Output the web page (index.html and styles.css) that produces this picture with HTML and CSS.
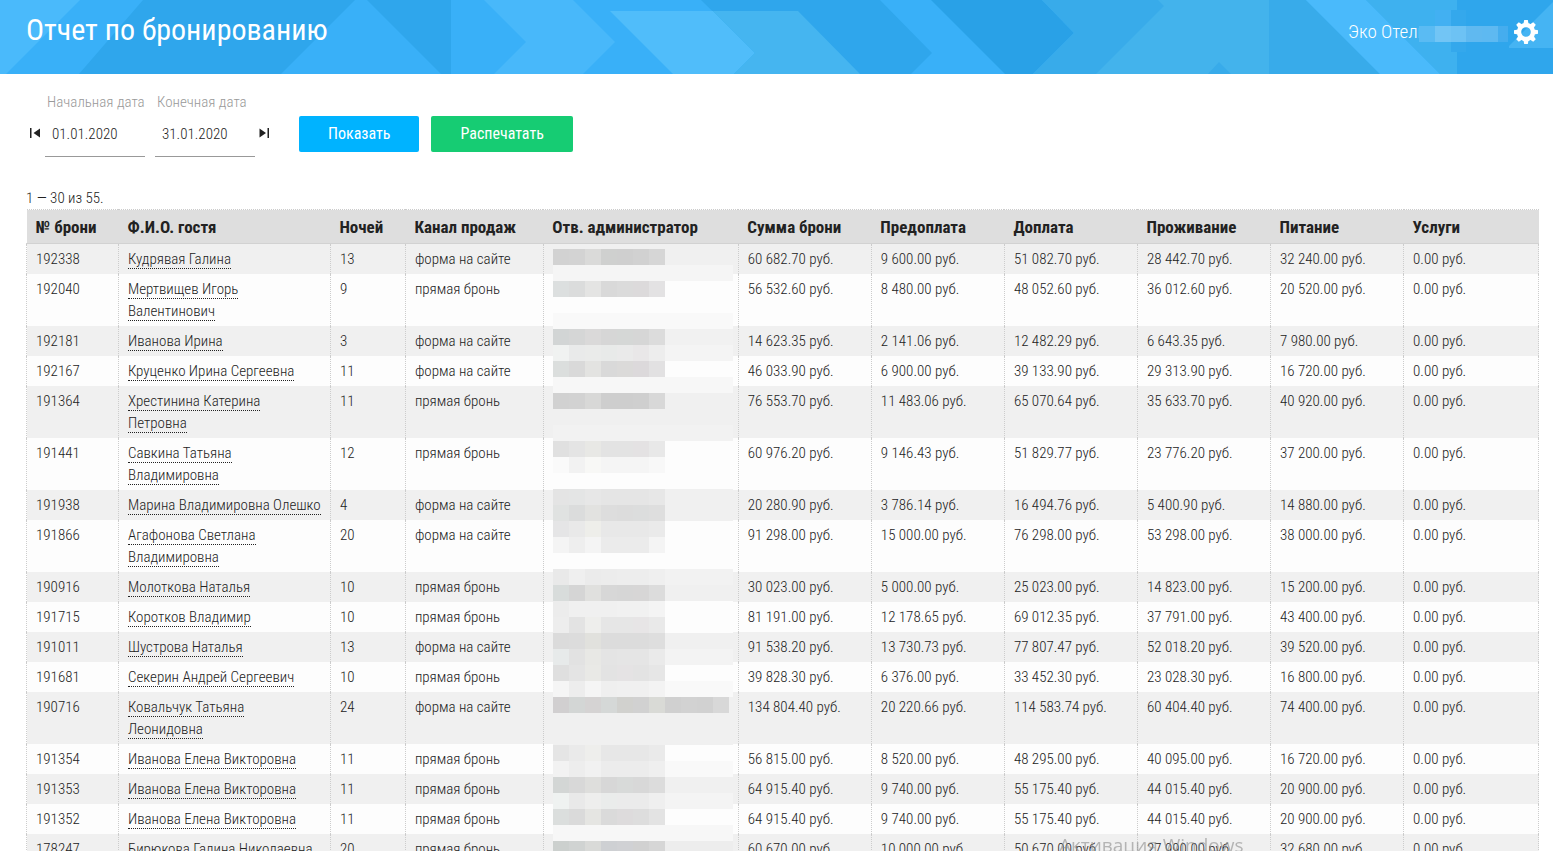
FILE: index.html
```html
<!DOCTYPE html>
<html lang="ru">
<head>
<meta charset="utf-8">
<title>Отчет по бронированию</title>
<link rel="stylesheet" href="styles.css">
</head>
<body>
<header class="header">
  <svg class="header-art" viewBox="0 0 1553 74" preserveAspectRatio="xMinYMin slice" aria-hidden="true">
    <rect width="1553" height="74" fill="#39b0f8"/>
    <path d="M0 0H80L6 74H0Z" fill="#4abafb"/>
    <path d="M143 0H355L281 74H79ZM367 0H451V74H441Z" fill="#2fa6ec"/>
    <path d="M484 0H573L615 42L583 74H494L526 42Z" fill="#48b8fa"/>
    <path d="M701 0H880L932 53L911 74H734L755 53Z" fill="#2fa6ec"/>
    <path d="M610 11H713L755 53L734 74H673Z" fill="#50bdfa"/>
    <path d="M713 11H798L860 74H734L755 53Z" fill="#45b5f0"/>
    <path d="M931 0H1042L1074 33L1033 74H1005Z" fill="#29a1e7"/>
    <path d="M1042 0H1306L1380 74H1033L1074 33Z" fill="#38abea"/>
    <path d="M1158 0H1269V74H1231L1219 62L1208 74H1096L1164 6Z" fill="#43b3ec"/>
    <path d="M1306 0H1366L1440 74H1380Z" fill="#4abafb"/>
    <path d="M1366 0H1457V74H1440Z" fill="#3eb1ef"/>
    <path d="M1457 0H1553V74H1457Z" fill="#2fa6ec"/>
    <path d="M1553 2V48H1509V46Z" fill="#45b4f3"/>
  </svg>
  <h1 class="title">Отчет по бронированию</h1>
  <div class="account">
    <span class="hotel">Эко Отель</span>
    <svg class="hotel-mask" width="94" height="44" viewBox="0 0 94 44" aria-hidden="true">
      <path d="M21 0H37V16H21Z" fill="#42b0f2"/>
      <path d="M37 0H52V42H37Z" fill="#34a8ec"/>
      <path d="M5 16H21V32H5Z" fill="#5abbf3"/>
      <path d="M21 16H37V32H21Z" fill="#72c5f5"/>
      <path d="M37 16H52V32H37Z" fill="#6dc2f4"/>
      <path d="M52 16H68V32H52Z" fill="#60b9f0"/>
      <path d="M68 16H84V32H68Z" fill="#5eb9f1"/>
      <path d="M84 16H94V32H84Z" fill="#45adee"/>
    </svg>
    <button class="gear" type="button" aria-label="Настройки">
      <svg width="24" height="24" viewBox="0 0 24 24" aria-hidden="true">
        <circle cx="12" cy="12" r="7" fill="none" stroke="#fff" stroke-width="4.4"/>
        <g fill="#fff">
          <path id="tooth" d="M10.2 0H13.8L14.6 4H9.4Z"/>
          <use href="#tooth" transform="rotate(45 12 12)"/>
          <use href="#tooth" transform="rotate(90 12 12)"/>
          <use href="#tooth" transform="rotate(135 12 12)"/>
          <use href="#tooth" transform="rotate(180 12 12)"/>
          <use href="#tooth" transform="rotate(225 12 12)"/>
          <use href="#tooth" transform="rotate(270 12 12)"/>
          <use href="#tooth" transform="rotate(315 12 12)"/>
        </g>
      </svg>
    </button>
  </div>
</header>
<main class="content">
  <form class="filters">
    <button class="step" type="button" aria-label="Предыдущий месяц"><svg width="12" height="10" viewBox="0 0 12 10" aria-hidden="true"><path d="M0 0H1.500V10H0ZM10 .5V9.5L3.500 5Z" fill="#222"/></svg></button>
    <div class="field"><label for="from">Начальная дата</label><input id="from" type="text" value="01.01.2020"></div>
    <div class="field field-last"><label for="to">Конечная дата</label><input id="to" type="text" value="31.01.2020"></div>
    <button class="step" type="button" aria-label="Следующий месяц"><svg width="12" height="10" viewBox="0 0 12 10" aria-hidden="true"><path d="M8.500 0H10V10H8.500ZM.5 .5V9.5L7 5Z" fill="#222"/></svg></button>
    <div class="actions">
      <button class="btn btn-show" type="button">Показать</button>
      <button class="btn btn-print" type="button">Распечатать</button>
    </div>
  </form>
  <p class="count">1 — 30 из 55.</p>
  <table class="report">
    <colgroup><col class="c-id"><col class="c-guest"><col class="c-nights"><col class="c-channel"><col class="c-admin"><col class="c-sum"><col class="c-sum"><col class="c-sum"><col class="c-sum"><col class="c-sum"><col class="c-last"></colgroup>
    <thead>
      <tr><th>№ брони</th><th>Ф.И.О. гостя</th><th>Ночей</th><th>Канал продаж</th><th>Отв. администратор</th><th>Сумма брони</th><th>Предоплата</th><th>Доплата</th><th>Проживание</th><th>Питание</th><th>Услуги</th></tr>
    </thead>
    <tbody>
      <tr><td>192338</td><td><a href="#">Кудрявая Галина</a></td><td>13</td><td>форма на сайте</td><td><div class="anchor"><svg class="mosaic" id="mosaic" width="180" height="608" aria-hidden="true"></svg></div></td><td>60 682.70 руб.</td><td>9 600.00 руб.</td><td>51 082.70 руб.</td><td>28 442.70 руб.</td><td>32 240.00 руб.</td><td>0.00 руб.</td></tr>
      <tr><td>192040</td><td><a href="#">Мертвищев Игорь Валентинович</a></td><td>9</td><td>прямая бронь</td><td></td><td>56 532.60 руб.</td><td>8 480.00 руб.</td><td>48 052.60 руб.</td><td>36 012.60 руб.</td><td>20 520.00 руб.</td><td>0.00 руб.</td></tr>
      <tr><td>192181</td><td><a href="#">Иванова Ирина</a></td><td>3</td><td>форма на сайте</td><td></td><td>14 623.35 руб.</td><td>2 141.06 руб.</td><td>12 482.29 руб.</td><td>6 643.35 руб.</td><td>7 980.00 руб.</td><td>0.00 руб.</td></tr>
      <tr><td>192167</td><td><a href="#">Круценко Ирина Сергеевна</a></td><td>11</td><td>форма на сайте</td><td></td><td>46 033.90 руб.</td><td>6 900.00 руб.</td><td>39 133.90 руб.</td><td>29 313.90 руб.</td><td>16 720.00 руб.</td><td>0.00 руб.</td></tr>
      <tr><td>191364</td><td><a href="#">Хрестинина Катерина Петровна</a></td><td>11</td><td>прямая бронь</td><td></td><td>76 553.70 руб.</td><td>11 483.06 руб.</td><td>65 070.64 руб.</td><td>35 633.70 руб.</td><td>40 920.00 руб.</td><td>0.00 руб.</td></tr>
      <tr><td>191441</td><td><a href="#">Савкина Татьяна Владимировна</a></td><td>12</td><td>прямая бронь</td><td></td><td>60 976.20 руб.</td><td>9 146.43 руб.</td><td>51 829.77 руб.</td><td>23 776.20 руб.</td><td>37 200.00 руб.</td><td>0.00 руб.</td></tr>
      <tr><td>191938</td><td><a href="#">Марина Владимировна Олешко</a></td><td>4</td><td>форма на сайте</td><td></td><td>20 280.90 руб.</td><td>3 786.14 руб.</td><td>16 494.76 руб.</td><td>5 400.90 руб.</td><td>14 880.00 руб.</td><td>0.00 руб.</td></tr>
      <tr><td>191866</td><td><a href="#">Агафонова Светлана Владимировна</a></td><td>20</td><td>форма на сайте</td><td></td><td>91 298.00 руб.</td><td>15 000.00 руб.</td><td>76 298.00 руб.</td><td>53 298.00 руб.</td><td>38 000.00 руб.</td><td>0.00 руб.</td></tr>
      <tr><td>190916</td><td><a href="#">Молоткова Наталья</a></td><td>10</td><td>прямая бронь</td><td></td><td>30 023.00 руб.</td><td>5 000.00 руб.</td><td>25 023.00 руб.</td><td>14 823.00 руб.</td><td>15 200.00 руб.</td><td>0.00 руб.</td></tr>
      <tr><td>191715</td><td><a href="#">Коротков Владимир</a></td><td>10</td><td>прямая бронь</td><td></td><td>81 191.00 руб.</td><td>12 178.65 руб.</td><td>69 012.35 руб.</td><td>37 791.00 руб.</td><td>43 400.00 руб.</td><td>0.00 руб.</td></tr>
      <tr><td>191011</td><td><a href="#">Шустрова Наталья</a></td><td>13</td><td>форма на сайте</td><td></td><td>91 538.20 руб.</td><td>13 730.73 руб.</td><td>77 807.47 руб.</td><td>52 018.20 руб.</td><td>39 520.00 руб.</td><td>0.00 руб.</td></tr>
      <tr><td>191681</td><td><a href="#">Секерин Андрей Сергеевич</a></td><td>10</td><td>прямая бронь</td><td></td><td>39 828.30 руб.</td><td>6 376.00 руб.</td><td>33 452.30 руб.</td><td>23 028.30 руб.</td><td>16 800.00 руб.</td><td>0.00 руб.</td></tr>
      <tr><td>190716</td><td><a href="#">Ковальчук Татьяна Леонидовна</a></td><td>24</td><td>форма на сайте</td><td></td><td>134 804.40 руб.</td><td>20 220.66 руб.</td><td>114 583.74 руб.</td><td>60 404.40 руб.</td><td>74 400.00 руб.</td><td>0.00 руб.</td></tr>
      <tr><td>191354</td><td><a href="#">Иванова Елена Викторовна</a></td><td>11</td><td>прямая бронь</td><td></td><td>56 815.00 руб.</td><td>8 520.00 руб.</td><td>48 295.00 руб.</td><td>40 095.00 руб.</td><td>16 720.00 руб.</td><td>0.00 руб.</td></tr>
      <tr><td>191353</td><td><a href="#">Иванова Елена Викторовна</a></td><td>11</td><td>прямая бронь</td><td></td><td>64 915.40 руб.</td><td>9 740.00 руб.</td><td>55 175.40 руб.</td><td>44 015.40 руб.</td><td>20 900.00 руб.</td><td>0.00 руб.</td></tr>
      <tr><td>191352</td><td><a href="#">Иванова Елена Викторовна</a></td><td>11</td><td>прямая бронь</td><td></td><td>64 915.40 руб.</td><td>9 740.00 руб.</td><td>55 175.40 руб.</td><td>44 015.40 руб.</td><td>20 900.00 руб.</td><td>0.00 руб.</td></tr>
      <tr><td>178247</td><td><a href="#">Бирюкова Галина Николаевна</a></td><td>20</td><td>прямая бронь</td><td></td><td>60 670.00 руб.</td><td>10 000.00 руб.</td><td>50 670.00 руб.</td><td>27 990.00 руб.</td><td>32 680.00 руб.</td><td>0.00 руб.</td></tr>
    </tbody>
  </table>
</main>
<div class="watermark">Активация Windows</div>
<script src="script.js"></script>
</body>
</html>
```
FILE: styles.css
```css
* { box-sizing: border-box; }

body {
  margin: 0;
  height: 100vh;
  overflow: hidden;
  background: #fff;
  color: #222;
  font: 300 15px/22px "Roboto Condensed", Roboto, sans-serif;
}

button, input { font: inherit; color: inherit; }

button {
  padding: 0;
  border: 0;
  background: none;
  cursor: pointer;
}

.header {
  position: relative;
  display: flex;
  justify-content: space-between;
  align-items: flex-start;
  height: 74px;
  padding: 8px 15px 0 26px;
  overflow: hidden;
  color: #fff;
  background: #39b0f8;
}

.header-art {
  position: absolute;
  top: 0;
  left: 0;
  width: 100%;
  height: 100%;
}

.title {
  position: relative;
  margin: 0;
  font-size: 30px;
  font-weight: 400;
  line-height: 44px;
}

.account {
  position: relative;
  display: flex;
  align-items: center;
  height: 48px;
}

.hotel {
  width: 71px;
  overflow: hidden;
  white-space: nowrap;
  font-size: 19px;
}

.hotel-mask {
  height: 44px;
  margin-left: -5px;
}

.gear {
  width: 24px;
  height: 24px;
  margin-left: 6px;
}

.gear svg, .step svg { display: block; }

.content { padding: 17px 14px 0 26px; }

.filters {
  display: flex;
  align-items: flex-end;
}

.step {
  display: flex;
  align-items: center;
  justify-content: center;
  width: 19px;
  height: 44px;
  padding-bottom: 4px;
}

.field {
  display: flex;
  flex-direction: column;
  width: 100px;
}

.field-last { margin-left: 10px; }

.field label {
  padding-left: 2px;
  color: #999;
  white-space: nowrap;
}

.field input {
  width: 100%;
  height: 44px;
  padding: 0 7px 2px;
  border: 0;
  border-bottom: 1px solid #999;
  border-radius: 0;
  background: none;
  outline: 0;
}

.actions {
  display: flex;
  gap: 12px;
  margin: 0 0 5px 25px;
}

.btn {
  height: 36px;
  padding: 0 29px;
  border-radius: 2px;
  color: #fff;
  font-size: 16px;
  font-weight: 400;
}

.btn-show { background: #00b3ff; }
.btn-print { background: #16cc73; }

.count { margin: 30px 0 0; }

.report {
  width: 100%;
  table-layout: fixed;
  border-collapse: collapse;
}

.c-id { width: 6.08%; }
.c-guest { width: 14.02%; }
.c-nights { width: 4.96%; }
.c-channel { width: 9.12%; }
.c-admin { width: 12.9%; }
.c-sum { width: 8.8%; }

.report th {
  height: 34px;
  padding: 0 0 0 9px;
  border-top: 1px dotted #ccc;
  border-bottom: 1px solid #d2d2d2;
  background: #dedede;
  font-size: 17px;
  font-weight: 700;
  text-align: left;
  white-space: nowrap;
}

.report td {
  padding: 4px 8px 4px 9px;
  border: 1px dotted #ccc;
  border-width: 0 1px;
  vertical-align: top;
}

.report tbody tr { background: #fdfdfd; }
.report tbody tr:nth-child(odd) { background: #f0f0f0; }

.report a {
  color: inherit;
  text-decoration: none;
  border-bottom: 1px dotted #222;
}

.anchor { position: relative; }

.mosaic {
  position: absolute;
  top: 1px;
  left: 0;
}

.watermark {
  position: fixed;
  left: 1059px;
  bottom: -8px;
  color: rgba(140, 140, 140, .6);
  font: 400 19px/28px "Open Sans", sans-serif;
  pointer-events: none;
}
```
FILE: script.js
```js
// Each line is one 16px band: cell colours, then "|" and the colour of the rest of the band.
const bands = [
  "d2d2d2 d3d3d3 dadad9 cfd0cf cfcfcf d1d1d1 d6d6d6|f0f0f0",
  "|f5f5f5",
  "dcdfdf dbdcdc e4e4e3 d9d9d9 dbdbdb dcdadb e3e2e3|fdfdfd",
  "|fdfdfd",
  "|f9f9f9",
  "d2d5d5 d5d6d6 dad9d9 d6d6d6 d5d7d6 d6d6d6 dcdcdc|f1f1f1",
  "f0f2f1 e9eaea eaebea e8eae9 eaeaea e9e7e8 ededed|f4f4f4",
  "dbdedd d9d9d9 e3e3e1 d9d9d9 dbdad9 dcd9db e2e1e2|fdfdfd",
  "|f7f7f7",
  "d1d1d1 d2d2d2 d8d8d7 cecece cecece cfcfcf d8d8d8|f0f0f0",
  "|f0f0f0",
  "|f2f2f2",
  "e0e0e0 e4e4e4 e8e8e5 e3e3e3 e3e3e3 e4e2e3 e8e8e8|fdfdfd",
  "fafafa f2f2f2 f8f8f6 f5f5f5 f5f5f5 f5f5f5 f8f8f8|fdfdfd",
  "|fdfdfd",
  "e4e4e4 e4e5e5 e7e7e7 e5e5e5 e5e5e5 e5e5e5 e7e7e7|f0f0f0",
  "e0e2e1 dbdcdc e2e2e0 dddddd dcdcdc dcdddd dedede|f0f0f0",
  "e5e5e6 e9e9e9 eeeeea e8e8e8 e8e8e8 e8e8e8 eaeaea|fdfdfd",
  "f4f4f4 eeeeee f4f4f4 ebebeb ebebeb ebebeb f4f4f4|fdfdfd",
  "|fdfdfd",
  "e9e9e9 efefef ebebeb ececec ededed ededed efefef|f2f2f2",
  "d8dcdb d5d5d5 e0e0de d7d7d7 d6d6d6 d7d6d6 dcdcdc|f0f0f0",
  "ececec f0f0f0 f0f0f0 f0f0f0 f1f1f1 f1f1f1 f4f4f4|fdfdfd",
  "ededed e3e3e3 eeeeec e6e6e6 e6e6e6 e7e5e6 e9e9e9|fdfdfd",
  "dbdbdb dcdcdc e1e1dd dcdcdc dcdcdc dcdcdc dedede|f0f0f0",
  "e7eaea e2e2e2 e8e8e5 e4e4e4 e5e5e5 e5e5e5 eaeaea|f3f3f3",
  "dfdfdf e4e4e4 e9e9e6 e3e3e3 e5e3e4 e3e3e3 e6e6e6|fdfdfd",
  "f5f5f5 ededed f5f5f5 efefef f0f0f0 f0f0f0 f3f3f3|f9f9f9",
  "d1cfd0 d3d6d5 d5d3d3 d5d8d7 d1d1ce d1d1d1 d9dad6 d0d0d0 d2d2d2 d1d1d1 d8d8d8|f0f0f0",
  "|f0f0f0",
  "|f0f0f0",
  "e5e5e5 eaeaea eeeeec e7e7e7 e7e7e7 e7e7e7 eaeaea|fdfdfd",
  "f2f2f2 ededed f1f1f1 ececec ececec ececec efefef|f9f9f9",
  "d3d6d5 d8d8d8 dededc d7d7d7 d8dad9 d8d8d8 dcdcdc|f0f0f0",
  "eff2f1 e9e9e9 eeeeed eaeceb ebebeb ebebeb efefef|f4f4f4",
  "dbdedd dadada e5e5e2 dadada dddbdc dddddd e3e3e3|fdfdfd",
  "|f7f7f7",
  "ccd0ce d0d3d2 d9dad8 ced0d3 d0d1d4 d1d1d1 d6d6d6|ededed"
];
const size = 16;
const mosaic = document.getElementById("mosaic");
const addRect = (x, y, width, colour) => {
  const rect = document.createElementNS("http://www.w3.org/2000/svg", "rect");
  rect.setAttribute("x", x);
  rect.setAttribute("y", y);
  rect.setAttribute("width", width);
  rect.setAttribute("height", size);
  rect.setAttribute("fill", "#" + colour);
  mosaic.appendChild(rect);
};
bands.forEach((band, row) => {
  const [cells, rest] = band.split("|");
  addRect(0, row * size, 180, rest);
  cells.split(" ").filter(Boolean).forEach((colour, i) => addRect(i * size, row * size, size, colour));
});
```
